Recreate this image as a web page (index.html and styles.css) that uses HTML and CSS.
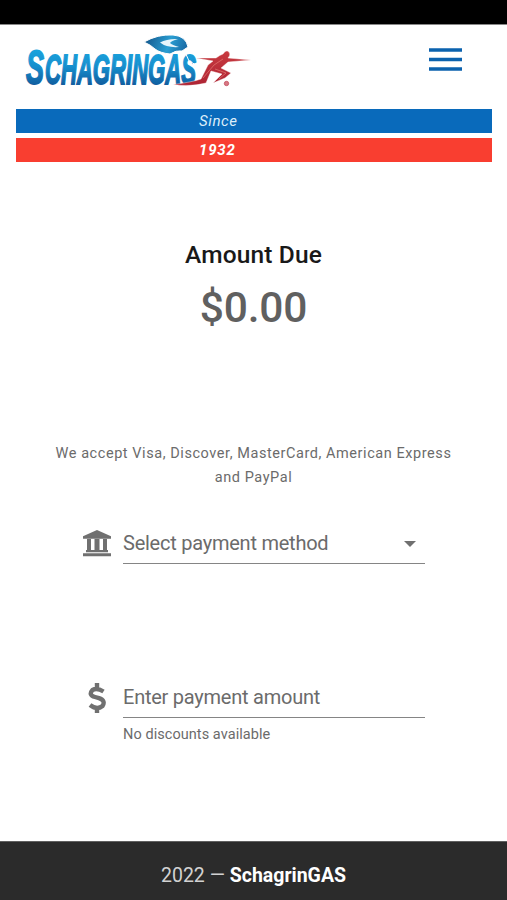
FILE: index.html
```html
<!DOCTYPE html>
<html lang="en">
<head>
<meta charset="utf-8">
<title>SchagrinGAS</title>
<link rel="stylesheet" href="styles.css">
</head>
<body>
<div class="status"></div>
<header class="header">
  <svg class="logo" viewBox="24 32 228 58" role="img" aria-label="SchagrinGAS">
    <defs>
      <linearGradient id="blue" x1="0" y1="47" x2="0" y2="86" gradientUnits="userSpaceOnUse"><stop offset="0" stop-color="#1ba6df"/><stop offset=".5" stop-color="#168fce"/><stop offset="1" stop-color="#105b9c"/></linearGradient>
      <linearGradient id="flame" x1="145" y1="36" x2="188" y2="52" gradientUnits="userSpaceOnUse"><stop offset="0" stop-color="#135489"/><stop offset=".55" stop-color="#2a9ed2"/><stop offset="1" stop-color="#16619d"/></linearGradient>
      <linearGradient id="red" x1="0" y1="50" x2="0" y2="86" gradientUnits="userSpaceOnUse"><stop offset="0" stop-color="#c93b40"/><stop offset="1" stop-color="#ad2333"/></linearGradient>
    </defs>
    <text class="letters" x="26" y="83.500" font-size="49" textLength="18" lengthAdjust="spacingAndGlyphs">S</text>
    <text class="letters" x="45" y="83.500" font-size="43" textLength="151" lengthAdjust="spacingAndGlyphs">CHAGRINGAS</text>
    <path class="flame" d="M144 42Q158 34 173 35Q186 36 188 47L182 51Q176 50 170 54Q160 53 155 49Q151 45 144 42Z"/>
    <path class="flame-core" d="M160 42.500Q167 38.500 178 39Q171 41 170 43Q172 45 179 47Q167 48 160 42.500Z"/>
    <path class="flame-cut" d="M185 52L189 61L198 66"/>
    <path class="runner" d="M196 58L216 58Q220 55 223 54Q226 49 229 52Q231 55 228 58L251 60L228 62L221 68L231 73L225 78L213 83L222 74L211 71L206 83Q190 87 173 84.500Q193 82 201 79L208 65L213 61Z"/>
    <path class="muscle" d="M203 78L214 65L223 59M215 69L226 73L219 79"/>
    <circle cx="226.500" cy="83.500" r="2.200" class="registered"/>
  </svg>
  <svg class="menu" viewBox="0 0 33 23"><path d="M0 2h33M0 11.500h33M0 21h33"/></svg>
</header>
<div class="banners">
  <div class="banner banner-blue">Since</div>
  <div class="banner banner-red">1932</div>
</div>
<main class="content">
  <h1 class="title">Amount Due</h1>
  <div class="amount">$0.00</div>
  <p class="accepted">We accept Visa, Discover, MasterCard, American Express<br>and PayPal</p>
  <div class="field method">
    <svg class="bank" viewBox="0 0 28 27"><path d="M14 0L28 6.300V8.700H0V6.300ZM4 9h4v11h3.500V9h5v11H20V9h4v11h1v2.300H3V20h1ZM0 23.300h28v3H0Z"/></svg>
    <div class="control"><span class="label">Select payment method</span><svg class="arrow" viewBox="0 0 12 6"><path d="M0 0h12L6 6Z"/></svg></div>
  </div>
  <div class="field payment">
    <svg class="dollar" viewBox="0 0 18 30"><path d="M9 0v6M9 24v6M15.500 8.500Q9 4.500 4.500 7Q0 12 7 14L11 15.200Q18 17.500 14.500 23Q9 27.500 2 22"/></svg>
    <div class="control"><span class="label">Enter payment amount</span></div>
  </div>
  <div class="hint">No discounts available</div>
</main>
<footer class="footer"><span class="year">2022 —</span>&nbsp;<strong>SchagrinGAS</strong></footer>
</body>
</html>
```
FILE: styles.css
```css
* { box-sizing: border-box; }
body { margin: 0; width: 507px; height: 900px; display: flex; flex-direction: column; overflow: hidden; background: #fff; color: #6b6b6b; font-family: Roboto, "Liberation Sans", sans-serif; }
.status { height: 25px; flex: none; background: #000; border-bottom: 1px solid #888; }
.header { height: 83px; flex: none; display: flex; justify-content: space-between; align-items: flex-start; padding: 7px 45px 0 24px; }
.logo { width: 228px; height: 58px; overflow: visible; }
.letters { font-family: "Liberation Sans Narrow", "Liberation Sans", sans-serif; font-weight: bold; font-style: italic; fill: url(#blue); stroke: url(#blue); stroke-width: 1.8; }
.flame { fill: url(#flame); stroke: #fff; stroke-width: 1; }
.flame-core { fill: #e7f5fb; }
.flame-cut { fill: none; stroke: #fff; stroke-width: 1; }
.runner { fill: url(#red); stroke: #fff; stroke-width: .4; }
.muscle { fill: none; stroke: #e0706c; stroke-width: .8; }
.registered { fill: #d77984; stroke: #bf4053; stroke-width: .7; }
.menu { width: 33px; height: 23px; margin-top: 16px; }
.menu path { stroke: #0b62ae; stroke-width: 3.6; }
.banners { flex: none; padding: 1px 15px 0 16px; display: flex; flex-direction: column; gap: 5px; }
.banner { height: 24px; padding-left: 183px; line-height: 24px; font-size: 15px; font-style: italic; letter-spacing: .6px; color: #fff; }
.banner-blue { background: #096abb; color: #dceefa; }
.banner-red { background: #f93e30; font-weight: 700; letter-spacing: .8px; }
.content { flex: 1; min-height: 0; display: flex; flex-direction: column; }
.title { margin: 77px 0 0; height: 32px; line-height: 32px; font-size: 24.500px; font-weight: 500; letter-spacing: .15px; text-align: center; color: #191919; }
.amount { height: 50px; margin-top: 12px; line-height: 50px; text-align: center; font-size: 42.500px; font-weight: 500; letter-spacing: -.2px; color: #606060; }
.accepted { margin: 109px 0 0; text-align: center; font-size: 14.500px; line-height: 24px; letter-spacing: .56px; }
.field { display: flex; width: 342px; margin-left: 83px; height: 40px; }
.method { margin-top: 34px; }
.payment { margin-top: 114px; }
.bank { width: 28px; height: 27px; margin: 6px 12px 0 0; }
.bank path, .arrow path { fill: #707070; }
.dollar { width: 18px; height: 30px; margin: 5px 17px 0 5px; }
.dollar path { fill: none; stroke: #707070; stroke-width: 4.4; }
.control { flex: 1; display: flex; justify-content: space-between; align-items: center; border-bottom: 1px solid #858585; }
.label { font-size: 20px; line-height: 39px; letter-spacing: -.24px; }
.arrow { width: 12px; height: 6px; margin-right: 9px; }
.hint { margin: 6px 0 0 123px; font-size: 14.500px; line-height: 22px; letter-spacing: .06px; }
.footer { height: 59px; flex: none; display: flex; justify-content: center; align-items: center; background: #2b2b2b; border-top: 1px solid #606060; padding-top: 9px; font-size: 19.500px; color: #fff; }
.year { color: #d2d2d2; }
```
